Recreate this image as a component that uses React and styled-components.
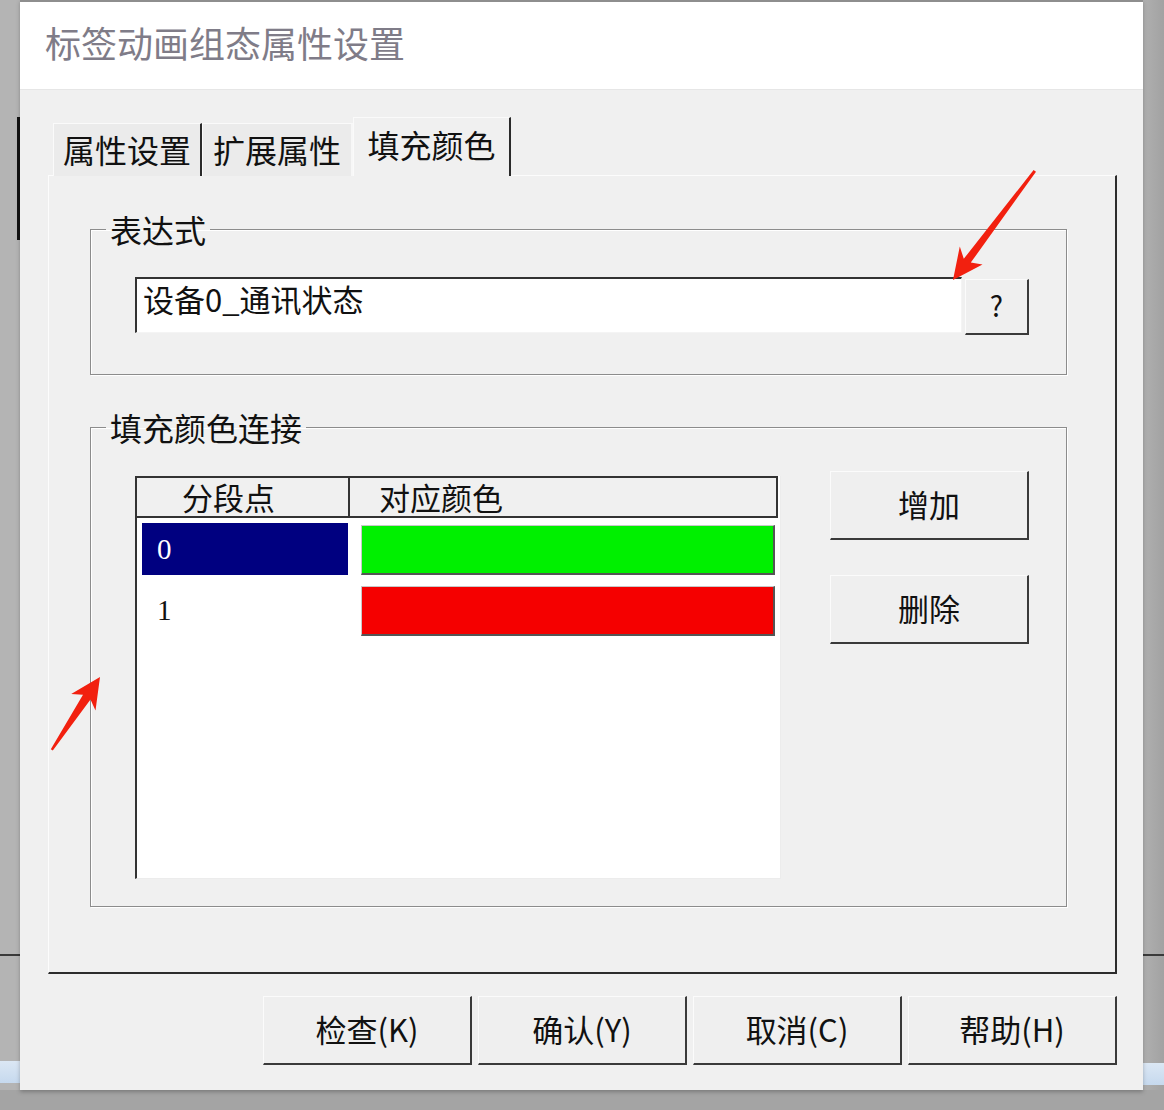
import React from "react"
import styled, { createGlobalStyle } from "styled-components"

const cjk = `"Noto Sans CJK SC", "Noto Sans", sans-serif`

const GlobalStyle = createGlobalStyle`
  html, body {
    margin: 0;
    padding: 0;
    background: #b3b3b3;
  }
  body {
    font-family: ${cjk};
  }
`

const rows = [
  { point: "0", color: "#00f000", selected: true },
  { point: "1", color: "#f50000", selected: false },
]

const footerButtons = ["检查(K)", "确认(Y)", "取消(C)", "帮助(H)"]

const Page = styled.div`
  position: relative;
  width: 1164px;
  height: 1110px;
  padding-left: 20px;
  box-sizing: border-box;
  background-color: #b4b4b4;
  background-image: linear-gradient(#121212, #121212),
    linear-gradient(#3a3a3a, #3a3a3a), linear-gradient(#3a3a3a, #3a3a3a),
    linear-gradient(#dbe7f4, #c6d9ee), linear-gradient(#dbe7f4, #c6d9ee),
    linear-gradient(#a4a4a4, #a4a4a4), linear-gradient(90deg, #b0b0b0, #a2a2a2);
  background-repeat: no-repeat;
  background-position: 17px 117px, 0 954px, 1143px 954px, 0 1061px,
    1143px 1063px, 0 1090px, 1143px 0;
  background-size: 3px 123px, 20px 2px, 21px 2px, 20px 22px, 21px 22px,
    100% 20px, 21px 1090px;
`

const Dialog = styled.div`
  width: 1123px;
  height: 1090px;
  display: flex;
  flex-direction: column;
  background: #f0f0f0;
  box-shadow: 0 2px 4px rgba(0, 0, 0, 0.25);
`

const TitleBar = styled.div`
  height: 90px;
  box-sizing: border-box;
  display: flex;
  align-items: center;
  padding: 0 0 8px 25px;
  background: #fff;
  border-top: 2px solid #8e8e8e;
  border-bottom: 1px solid #e6e6e6;
  font-size: 36px;
  color: #7f7c88;
`

const Body = styled.div`
  flex: 1;
  display: flex;
  flex-direction: column;
  padding: 27px 26px 25px 28px;
`

const TabStrip = styled.div`
  display: flex;
  align-items: flex-end;
  padding-left: 5px;
  height: 59px;
  margin-bottom: -1px;
  position: relative;
  z-index: 1;
`

const Tab = styled.div`
  box-sizing: border-box;
  width: ${(p) => p.$w}px;
  height: ${(p) => (p.$active ? 59 : 53)}px;
  display: flex;
  align-items: center;
  justify-content: center;
  padding-bottom: ${(p) => (p.$active ? 6 : 2)}px;
  font-size: 32px;
  color: #111;
  background: ${(p) => (p.$active ? "#f0f0f0" : "#ebebeb")};
  border-top: 1px solid #fafafa;
  border-left: 1px solid #fafafa;
  border-right: 2px solid ${(p) => (p.$dark ? "#2a2a2a" : "#f7f7f7")};
`

const Pane = styled.div`
  box-sizing: border-box;
  height: 799px;
  display: flex;
  flex-direction: column;
  gap: 36px;
  padding: 37px 48px 0 41px;
  border-top: 1px solid #fcfcfc;
  border-left: 1px solid #fcfcfc;
  border-right: 2px solid #2c2c2c;
  border-bottom: 2px solid #2c2c2c;
`

const Group = styled.fieldset`
  margin: 0;
  min-width: 0;
  padding: ${(p) => p.$pad};
  border: 1px solid #8c8c8c;
  box-shadow: 1px 1px 0 #fff, inset 1px 1px 0 #fff;
`

const Legend = styled.legend`
  padding: 0 4px;
  margin-left: 0;
  font-size: 32px;
  line-height: 32px;
  color: #111;
`

const ExprRow = styled.div`
  display: flex;
  align-items: flex-start;
  gap: 3px;
  margin-left: 29px;
`

const ExprInput = styled.div`
  flex: 1;
  box-sizing: border-box;
  height: 56px;
  padding: 0 0 0 6px;
  background: #fff;
  border-top: 2px solid #333;
  border-left: 2px solid #333;
  border-right: 1px solid #f4f4f4;
  border-bottom: 1px solid #f4f4f4;
  font-size: 31px;
  line-height: 40px;
  color: #111;
`

const Button = styled.button`
  box-sizing: border-box;
  width: ${(p) => p.$w}px;
  height: ${(p) => p.$h}px;
  margin-top: ${(p) => p.$mt || 0}px;
  padding: 0 0 4px;
  background: #efefef;
  border: none;
  border-top: 1px solid #fbfbfb;
  border-left: 1px solid #fbfbfb;
  border-right: 2px solid #3a3a3a;
  border-bottom: 2px solid #3a3a3a;
  font-family: ${cjk};
  font-size: ${(p) => p.$fs || 31}px;
  color: #111;
`

const LinkRow = styled.div`
  display: flex;
  align-items: flex-start;
  margin-left: 29px;
`

const List = styled.div`
  box-sizing: border-box;
  width: 646px;
  height: 403px;
  margin-top: 5px;
  background: #fff;
  border-left: 2px solid #333;
  border-right: 1px solid #ececec;
  border-bottom: 1px solid #ececec;
`

const ListHeader = styled.div`
  display: grid;
  grid-template-columns: 213px 1fr;
  height: 42px;
  box-sizing: border-box;
  margin-right: 2px;
  background: #f0f0f0;
  border-top: 2px solid #333;
  border-bottom: 2px solid #333;
  border-right: 2px solid #333;
`

const HeaderCell = styled.div`
  display: flex;
  align-items: center;
  justify-content: ${(p) => (p.$center ? "center" : "flex-start")};
  padding: ${(p) => (p.$center ? "0 28px 0 0" : "0 0 0 29px")};
  border-right: ${(p) => (p.$divider ? "2px solid #333" : "none")};
  font-size: 31px;
  line-height: 36px;
  color: #111;
`

const Rows = styled.div`
  padding-top: 5px;
`

const Row = styled.div`
  display: grid;
  grid-template-columns: 206px 414px;
  column-gap: 13px;
  height: 61px;
  padding-left: 5px;
  align-items: start;
`

const PointCell = styled.div`
  height: 52px;
  display: flex;
  align-items: center;
  padding-left: 15px;
  background: ${(p) => (p.$selected ? "#000080" : "transparent")};
  color: ${(p) => (p.$selected ? "#fff" : "#111")};
  font-family: "Liberation Serif", ${cjk};
  font-size: 29px;
`

const ColorBar = styled.div`
  box-sizing: border-box;
  height: 50px;
  margin-top: 2px;
  background: ${(p) => p.$color};
  border-top: 1px solid #c8c8c8;
  border-left: 1px solid #c8c8c8;
  border-right: 2px solid #555;
  border-bottom: 2px solid #555;
`

const SideButtons = styled.div`
  display: flex;
  flex-direction: column;
  gap: 35px;
  margin-left: auto;
`

const Footer = styled.div`
  display: flex;
  justify-content: flex-end;
  gap: 6px;
  margin-top: 22px;
`

const Marks = styled.svg`
  position: absolute;
  top: 0;
  left: 0;
  pointer-events: none;
`

const App = () => {
  return (
    <Page>
      <GlobalStyle />
      <Dialog>
        <TitleBar>标签动画组态属性设置</TitleBar>
        <Body>
          <TabStrip>
            <Tab $w={149} $dark>属性设置</Tab>
            <Tab $w={151}>扩展属性</Tab>
            <Tab $w={158} $active $dark>填充颜色</Tab>
          </TabStrip>
          <Pane>
            <Group $pad="32px 37px 39px 15px">
              <Legend>表达式</Legend>
              <ExprRow>
                <ExprInput>设备0_通讯状态</ExprInput>
                <Button $w={64} $h={56} $mt={2} $fs={28}>?</Button>
              </ExprRow>
            </Group>
            <Group $pad="28px 37px 27px 15px">
              <Legend>填充颜色连接</Legend>
              <LinkRow>
                <List>
                  <ListHeader>
                    <HeaderCell $center $divider>分段点</HeaderCell>
                    <HeaderCell>对应颜色</HeaderCell>
                  </ListHeader>
                  <Rows>
                    {rows.map((r) => (
                      <Row key={r.point}>
                        <PointCell $selected={r.selected}>{r.point}</PointCell>
                        <ColorBar $color={r.color} />
                      </Row>
                    ))}
                  </Rows>
                </List>
                <SideButtons>
                  <Button $w={199} $h={69}>增加</Button>
                  <Button $w={199} $h={69}>删除</Button>
                </SideButtons>
              </LinkRow>
            </Group>
          </Pane>
          <Footer>
            {footerButtons.map((label) => (
              <Button key={label} $w={209} $h={69}>
                {label}
              </Button>
            ))}
          </Footer>
        </Body>
      </Dialog>
      <Marks width="1164" height="1110" viewBox="0 0 1164 1110">
        <polygon
          fill="#f2200f"
          points="953,280 982.5,264.5 970.8,262.6 1036,171.7 1033.6,170 963.8,258.8 959.8,246.5"
        />
        <polygon
          fill="#f2200f"
          points="100,677 95.5,710.5 90.5,699.6 52.8,750.6 50.8,749.2 83,694.8 71.2,694"
        />
      </Marks>
    </Page>
  )
}

export default App
